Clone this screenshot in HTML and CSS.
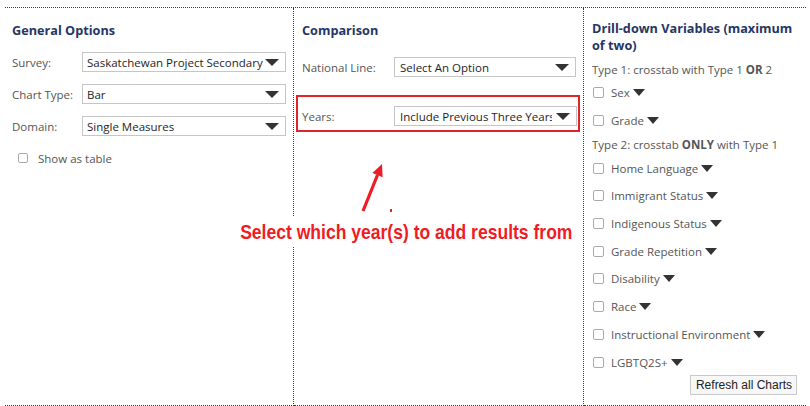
FILE: index.html
```html
<!DOCTYPE html>
<html lang="en">
<head>
    <meta charset="UTF-8">
    <meta name="viewport" content="width=device-width, initial-scale=1.0">
    <title>Chart Options</title>
    <link rel="stylesheet" href="styles.css">
</head>
<body>
    <div class="options">
        <div class="column general">
            <h3>General Options</h3>
            <div class="field">
                <span class="label">Survey:</span>
                <div class="select"><span class="value">Saskatchewan Project Secondary</span><span class="caret"></span></div>
            </div>
            <div class="field">
                <span class="label">Chart Type:</span>
                <div class="select"><span class="value">Bar</span><span class="caret"></span></div>
            </div>
            <div class="field">
                <span class="label">Domain:</span>
                <div class="select"><span class="value">Single Measures</span><span class="caret"></span></div>
            </div>
            <label class="check table-check"><span class="box"></span>Show as table</label>
        </div>

        <div class="column comparison">
            <h3>Comparison</h3>
            <div class="field">
                <span class="label">National Line:</span>
                <div class="select"><span class="value">Select An Option</span><span class="caret"></span></div>
            </div>
            <div class="field highlight">
                <span class="label">Years:</span>
                <div class="select"><span class="value">Include Previous Three Years</span><span class="caret"></span></div>
            </div>
        </div>

        <div class="column drill">
            <h3>Drill-down Variables (maximum of two)</h3>
            <p class="type">Type 1: crosstab with Type 1 <b>OR</b> 2</p>
            <label class="check"><span class="box"></span>Sex<span class="caret"></span></label>
            <label class="check"><span class="box"></span>Grade<span class="caret"></span></label>
            <p class="type">Type 2: crosstab <b>ONLY</b> with Type 1</p>
            <label class="check"><span class="box"></span>Home Language<span class="caret"></span></label>
            <label class="check"><span class="box"></span>Immigrant Status<span class="caret"></span></label>
            <label class="check"><span class="box"></span>Indigenous Status<span class="caret"></span></label>
            <label class="check"><span class="box"></span>Grade Repetition<span class="caret"></span></label>
            <label class="check"><span class="box"></span>Disability<span class="caret"></span></label>
            <label class="check"><span class="box"></span>Race<span class="caret"></span></label>
            <label class="check"><span class="box"></span>Instructional Environment<span class="caret"></span></label>
            <label class="check"><span class="box"></span>LGBTQ2S+<span class="caret"></span></label>
            <div class="actions">
                <button>Refresh all Charts</button>
            </div>
        </div>

        <!-- annotation laid over the panel -->
        <svg class="arrow" width="40" height="56" viewBox="0 0 40 56">
            <line x1="3" y1="51" x2="17.5" y2="15" stroke="#ee1c25" stroke-width="3.2"/>
            <polygon points="22,4 22.6,17.2 12.4,13" fill="#ee1c25"/>
            <rect x="30" y="49" width="2" height="3" fill="#ee1c25"/>
        </svg>
        <div class="note">Select which year(s) to add results from</div>
    </div>
</body>
</html>
```

FILE: styles.css
```css
body {
    margin: 0;
    font-family: "Open Sans", Arial, sans-serif;
    font-size: 11.5px;
    color: #555;
    background: #fff;
}

.options {
    position: relative;
    display: flex;
    margin: 7px 4px 0 5px;
    height: 398px;
    border-top: 1px dotted #2d4a0e;
}

.column {
    border-bottom: 1px dotted #2d4a0e;
}

.general {
    width: 289px;
    padding: 13px 7px 0 7px;
    box-sizing: border-box;
    border-right: 1px dotted #2d4a0e;
}

.comparison {
    width: 290px;
    padding: 13px 7px 0 8px;
    box-sizing: border-box;
    border-right: 1px dotted #2d4a0e;
}

.drill {
    flex: 1;
    padding: 12px 4px 0 8px;
}

h3 {
    margin: 0;
    font-size: 12.7px;
    line-height: 18px;
    font-weight: 700;
    color: #253664;
}

.drill h3 {
    line-height: 17px;
}

.field {
    display: flex;
    align-items: center;
    margin-top: 12px;
}

.general h3 + .field {
    margin-top: 13px;
}

.label {
    width: 70px;
    flex-shrink: 0;
}

.comparison .label {
    width: 92px;
}

.comparison h3 + .field {
    margin-top: 18px;
}

.select {
    display: flex;
    align-items: center;
    width: 206px;
    height: 20px;
    box-sizing: border-box;
    border: 1px solid #c6c6c6;
    padding: 0 6px 0 4px;
    color: #1e1e1e;
    background: #fff;
}

.comparison .select {
    width: 183px;
    padding-left: 5px;
}

.value {
    flex: 1;
    min-width: 0;
    overflow: hidden;
    white-space: nowrap;
}

.caret {
    flex-shrink: 0;
    width: 0;
    height: 0;
    border-left: 7px solid transparent;
    border-right: 7px solid transparent;
    border-top: 7px solid #333;
}

.select .caret {
    margin-left: 2px;
}

.highlight .select .caret {
    margin-left: 4px;
}

.highlight {
    margin: 18px -4px 0 -6px;
    padding: 9px 3px 4px 4px;
    border: 2px solid #e2242a;
}

.check {
    display: flex;
    align-items: center;
    height: 27.7px;
}

.box {
    width: 11px;
    height: 11px;
    box-sizing: border-box;
    border: 1px solid #aaa;
    border-radius: 2px;
    margin: 0 7px 0 1px;
    background: #fff;
}

.check .caret {
    margin-left: 3px;
    border-left-width: 6px;
    border-right-width: 6px;
}

.table-check {
    margin: 12px 0 0 6px;
    height: 20px;
}

.table-check .box {
    width: 10px;
    height: 10px;
    margin: 0 10px 0 0;
}

.type {
    margin: 2px 0 0;
    line-height: 18px;
}

.drill h3 + .type {
    margin-top: 7px;
}

.actions {
    display: flex;
    justify-content: flex-end;
    margin: -1px 5px 0 0;
}

button {
    font-family: "Liberation Sans", Arial, sans-serif;
    font-size: 12px;
    color: #222;
    height: 20px;
    padding: 0 4px 0 5px;
    background: #f7f7f7;
    border: 1px solid #c9c9c9;
    border-radius: 0;
}

.arrow {
    position: absolute;
    left: 355px;
    top: 152px;
}

.note {
    position: absolute;
    left: 231px;
    top: 209px;
    padding: 3px 5px;
    background: #fff;
    font-family: "Liberation Sans", Arial, sans-serif;
    font-size: 21px;
    line-height: 24px;
    font-weight: 700;
    color: #ee1c25;
    white-space: nowrap;
    transform: scaleX(0.835);
    transform-origin: 0 0;
}
```
